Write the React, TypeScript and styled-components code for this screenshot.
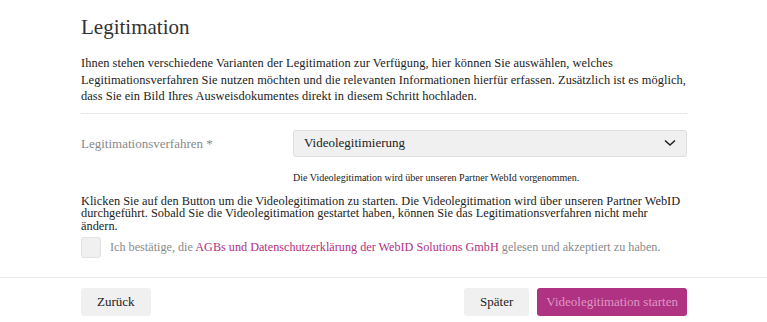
import { FC } from "react";
import styled, { createGlobalStyle } from "styled-components";

const GlobalStyle = createGlobalStyle`
  html, body {
    margin: 0;
    padding: 0;
    background: #ffffff;
  }
  body {
    font-family: "Liberation Serif", "DejaVu Serif", serif;
    color: #333333;
  }
  * {
    box-sizing: border-box;
  }
`;

const Page = styled.div`
  width: 767px;
  height: 322px;
  overflow: hidden;
  display: flex;
  flex-direction: column;
`;

const Body = styled.div`
  padding: 14px 80px 0 81px;
  flex: 1;
`;

const Title = styled.h2`
  margin: 0 0 15px;
  font-size: 21px;
  font-weight: 400;
  line-height: 26px;
  color: #333;
`;

const Intro = styled.p`
  margin: 0;
  font-size: 12.4px;
  letter-spacing: 0.05px;
  line-height: 16.5px;
  color: #222;
`;

const Divider = styled.hr`
  margin: 8px 0 16px;
  border: 0;
  border-top: 1px solid #e8e8e8;
`;

const FieldRow = styled.div`
  display: grid;
  grid-template-columns: 212px 1fr;
  align-items: start;
`;

const Label = styled.label`
  font-size: 13px;
  line-height: 27px;
  color: #8a8a8a;
`;

const SelectBox = styled.div`
  height: 27px;
  display: flex;
  align-items: center;
  justify-content: space-between;
  padding: 0 10px 0 10px;
  background: #f0f0f0;
  border: 1px solid #dedede;
  border-radius: 3px;
  font-size: 13px;
  color: #222;
`;

const Hint = styled.div`
  margin-top: 14px;
  font-size: 10px;
  line-height: 13px;
  color: #222;
`;

const Notice = styled.p`
  margin: 11px 0 0;
  font-size: 12.35px;
  line-height: 12.5px;
  color: #222;
`;

const CheckRow = styled.label`
  display: flex;
  align-items: center;
  gap: 9px;
  margin-top: 5px;
  font-size: 12.2px;
  color: #8a8a8a;
`;

const CheckBox = styled.span`
  width: 20px;
  height: 21px;
  background: #f0f0f0;
  border: 1px solid #e2e2e2;
  border-radius: 3px;
`;

const Link = styled.a`
  color: #b0307f;
  text-decoration: none;
`;

const Footer = styled.div`
  border-top: 1px solid #e8e8e8;
  padding: 10px 80px 6px 81px;
  display: flex;
  align-items: center;
  gap: 8px;
`;

const Button = styled.button<{ $primary?: boolean }>`
  height: 28px;
  padding: 0 ${(p) => (p.$primary ? "9px" : "16px")};
  border: 0;
  border-radius: 3px;
  font-family: "Liberation Serif", "DejaVu Serif", serif;
  font-size: 13px;
  background: ${(p) => (p.$primary ? "#b03282" : "#f0f0f0")};
  color: ${(p) => (p.$primary ? "#dc96c2" : "#222")};
`;

const Spacer = styled.div`
  flex: 1;
`;

const App: FC = () => {
  return (
    <>
      <GlobalStyle />
      <Page>
        <Body>
          <Title>Legitimation</Title>
          <Intro>
            Ihnen stehen verschiedene Varianten der Legitimation zur Verfügung, hier können Sie
            auswählen, welches Legitimationsverfahren Sie nutzen möchten und die relevanten
            Informationen hierfür erfassen. Zusätzlich ist es möglich, dass Sie ein Bild Ihres
            Ausweisdokumentes direkt in diesem Schritt hochladen.
          </Intro>
          <Divider />
          <FieldRow>
            <Label>Legitimationsverfahren *</Label>
            <div>
              <SelectBox>
                <span>Videolegitimierung</span>
                <svg width="12" height="8" viewBox="0 0 12 8" fill="none">
                  <path d="M1 1.5L6 6L11 1.5" stroke="#222" strokeWidth="1.6" />
                </svg>
              </SelectBox>
              <Hint>Die Videolegitimation wird über unseren Partner WebId vorgenommen.</Hint>
            </div>
          </FieldRow>
          <Notice>
            Klicken Sie auf den Button um die Videolegitimation zu starten. Die Videolegitimation
            wird über unseren Partner WebID durchgeführt. Sobald Sie die Videolegitimation gestartet
            haben, können Sie das Legitimationsverfahren nicht mehr ändern.
          </Notice>
          <CheckRow>
            <CheckBox />
            <span>
              Ich bestätige, die <Link>AGBs und Datenschutzerklärung der WebID Solutions GmbH</Link>{" "}
              gelesen und akzeptiert zu haben.
            </span>
          </CheckRow>
        </Body>
        <Footer>
          <Button>Zurück</Button>
          <Spacer />
          <Button>Später</Button>
          <Button $primary>Videolegitimation starten</Button>
        </Footer>
      </Page>
    </>
  );
};

export default App;
